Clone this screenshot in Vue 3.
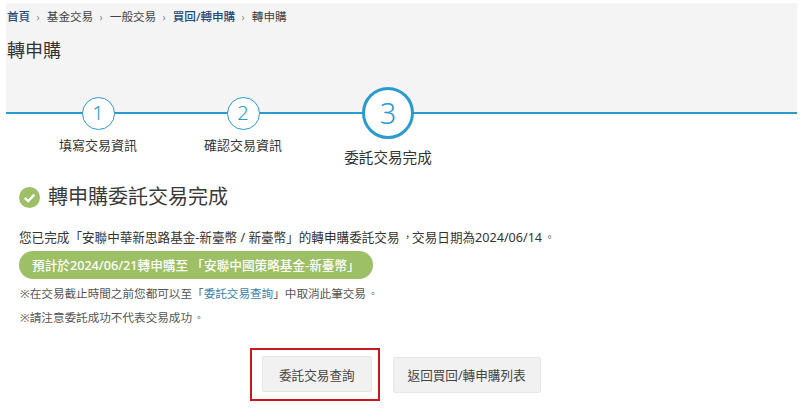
<script setup>
const crumbs = [
  { text: '首頁', link: true },
  { text: '基金交易' },
  { text: '一般交易' },
  { text: '買回/轉申購', link: true },
  { text: '轉申購' }
]
const steps = [
  { no: 1, label: '填寫交易資訊' },
  { no: 2, label: '確認交易資訊' },
  { no: 3, label: '委託交易完成', current: true }
]
</script>

<template>
  <div class="page" lang="zh-TW">
    <div class="head">
      <nav class="crumbs">
        <template v-for="(c, i) in crumbs" :key="c.text">
          <span v-if="i" class="sep">›</span>
          <a :class="{ link: c.link }">{{ c.text }}</a>
        </template>
      </nav>
      <h1>轉申購</h1>
    </div>

    <ol class="steps">
      <li v-for="s in steps" :key="s.no" :class="['step', { current: s.current }]">
        <span class="num">{{ s.no }}</span>
        <span class="label">{{ s.label }}</span>
      </li>
    </ol>

    <section class="result">
      <h2>
        <svg class="check" viewBox="0 0 21 21" width="21" height="21">
          <circle cx="10.5" cy="10.5" r="10.5" fill="#9dbf65" />
          <path d="M5.8 10.8l3.4 3.3 6.2-6.5" fill="none" stroke="#fff" stroke-width="2.4" />
        </svg>
        轉申購委託交易完成
      </h2>
      <p class="summary">您已完成「安聯中華新思路基金-新臺幣 / 新臺幣」的轉申購委託交易<span class="punct">，</span>交易日期為2024/06/14<span class="punct">。</span></p>
      <p class="pill">預計於2024/06/21轉申購至 「安聯中國策略基金-新臺幣」</p>
      <p class="note">※在交易截止時間之前您都可以至「<a>委託交易查詢</a>」中取消此筆交易<span class="punct">。</span></p>
      <p class="note second">※請注意委託成功不代表交易成功<span class="punct">。</span></p>
      <div class="actions">
        <div class="marked"><button>委託交易查詢</button></div>
        <button>返回買回/轉申購列表</button>
      </div>
    </section>
  </div>
</template>

<style>
html, body { margin: 0; background: #fff; }
</style>

<style scoped>
.page {
  width: 806px;
  height: 415px;
  overflow: hidden;
  box-sizing: border-box;
  padding: 3px 9px 0 6px;
  color: #333;
  font-family: "Noto Sans", "Noto Sans CJK TC", sans-serif;
  font-size: 11px;
}
.head {
  background: #f4f4f4;
  height: 109px;
  padding-top: 6px;
  box-sizing: border-box;
}
.crumbs {
  display: flex;
  align-items: center;
  height: 16px;
  font-size: 11.6px;
  line-height: 16px;
  color: #444;
}
.crumbs a { margin: 0 0 0 1px; }
.crumbs .link { color: #1f4a7c; font-weight: 500; }
.sep { width: 15.6px; text-align: center; color: #888; font-size: 10px; }
h1 {
  margin: 12px 0 0 1px;
  font-size: 18px;
  line-height: 26px;
  font-weight: 400;
  color: #333;
}
.steps {
  list-style: none;
  margin: 0;
  padding: 0 0 0 52px;
  height: 74px;
  border-top: 2px solid #2b9ad0;
  display: flex;
  gap: 65px;
  align-items: flex-start;
}
.step {
  width: 80px;
  margin-top: -17px;
  display: flex;
  flex-direction: column;
  align-items: center;
}
.num {
  width: 33px;
  height: 33px;
  box-sizing: border-box;
  border: 1px solid #2b9ad0;
  border-radius: 50%;
  background: #fff;
  color: #2b9ad0;
  font-size: 20px;
  font-weight: 300;
  line-height: 30px;
  text-align: center;
}
.label { margin-top: 6px; font-size: 13px; line-height: 18px; white-space: nowrap; }
.step.current { margin-top: -27px; }
.step.current .num {
  width: 52px;
  height: 52px;
  border-width: 3px;
  font-size: 29px;
  line-height: 45px;
}
.step.current .label { margin-top: 9px; font-size: 14.6px; }
.result { padding: 0 0 0 13px; margin-top: -5px; }
h2 {
  margin: 0;
  display: flex;
  align-items: center;
  gap: 8px;
  font-size: 20px;
  line-height: 28px;
  font-weight: 400;
  color: #3a3a3a;
}
p { margin: 0; }
.summary { margin-top: 18px; font-size: 12.6px; line-height: 18px; font-weight: 400; color: #333; }
/* the installed CJK face sets these off-centre; the reference has them centred */
.punct { display: inline-block; transform: translate(0.1em, -0.04em) scale(0.8); }
.pill {
  display: inline-block;
  margin-top: 4px;
  padding: 0 13px;
  height: 28px;
  line-height: 28px;
  border-radius: 14px;
  background: #9dbf65;
  color: #fff;
  font-size: 12.65px;
  font-weight: 500;
  white-space: nowrap;
}
.note { margin-top: 5px; padding-left: 1px; font-size: 11.6px; line-height: 20px; color: #555; }
.note.second { margin-top: 4px; }
.note a { color: #3a7fae; }
.actions {
  display: flex;
  align-items: center;
  gap: 13px;
  margin-top: 20px;
  padding-left: 231px;
}
.marked { border: 2px solid #c8171e; padding: 6px 6px 7px 10px; }
button {
  display: block;
  height: 36px;
  padding: 0 14px;
  border: 1px solid #e6e6e6;
  border-radius: 2px;
  background: #f1f1f1;
  color: #444;
  font-family: inherit;
  font-size: 12.6px;
}
.marked button { padding: 0 16px; }
</style>
